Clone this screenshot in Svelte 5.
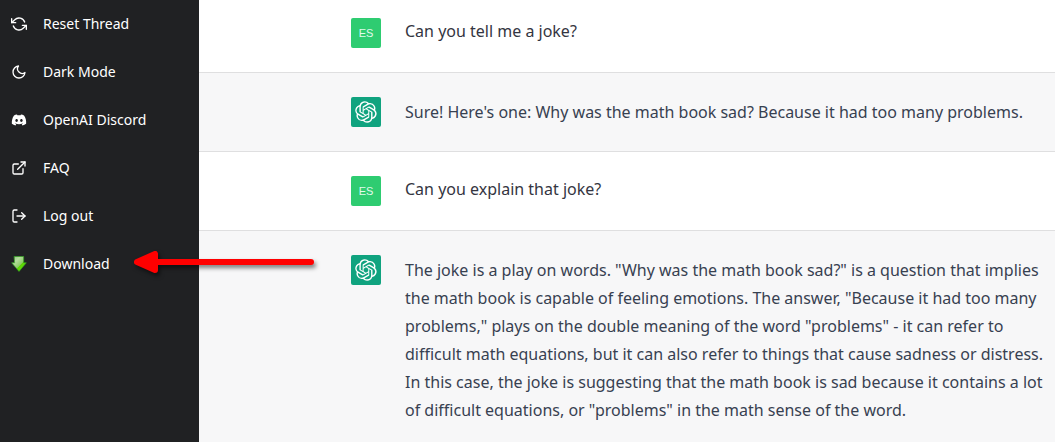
<script>
  const links = [
    { icon: 'reset', label: 'Reset Thread' },
    { icon: 'moon', label: 'Dark Mode' },
    { icon: 'discord', label: 'OpenAI Discord' },
    { icon: 'external', label: 'FAQ' },
    { icon: 'logout', label: 'Log out' },
    { icon: 'download', label: 'Download' }
  ];

  const messages = [
    { from: 'user', text: 'Can you tell me a joke?' },
    { from: 'bot', text: "Sure! Here's one: Why was the math book sad? Because it had too many problems." },
    { from: 'user', text: 'Can you explain that joke?' },
    {
      from: 'bot',
      text: 'The joke is a play on words. "Why was the math book sad?" is a question that implies the math book is capable of feeling emotions. The answer, "Because it had too many problems," plays on the double meaning of the word "problems" - it can refer to difficult math equations, but it can also refer to things that cause sadness or distress. In this case, the joke is suggesting that the math book is sad because it contains a lot of difficult equations, or "problems" in the math sense of the word.'
    }
  ];
</script>

<div class="app">
  <nav class="sidebar">
    {#each links as link}
      <div class="item">
        <a href="#{link.icon}">
          <svg class="icon" viewBox="0 0 24 24" aria-hidden="true">
            {#if link.icon === 'reset'}
              <polyline points="1 4 1 10 7 10" />
              <polyline points="23 20 23 14 17 14" />
              <path d="M20.49 9A9 9 0 0 0 5.64 5.64L1 10m22 4l-4.64 4.36A9 9 0 0 1 3.51 15" />
            {:else if link.icon === 'moon'}
              <path d="M21 12.79A9 9 0 1 1 11.21 3 7 7 0 0 0 21 12.79z" />
            {:else if link.icon === 'discord'}
              <path
                class="solid"
                transform="translate(1.2 1.2) scale(0.9)"
                d="M20.317 4.37a19.791 19.791 0 0 0-4.885-1.515.074.074 0 0 0-.079.037c-.21.375-.444.864-.608 1.25a18.27 18.27 0 0 0-5.487 0 12.64 12.64 0 0 0-.617-1.25.077.077 0 0 0-.079-.037A19.736 19.736 0 0 0 3.677 4.37a.07.07 0 0 0-.032.027C.533 9.046-.32 13.58.099 18.057a.082.082 0 0 0 .031.057 19.9 19.9 0 0 0 5.993 3.03.078.078 0 0 0 .084-.028 14.09 14.09 0 0 0 1.226-1.994.076.076 0 0 0-.041-.106 13.107 13.107 0 0 1-1.872-.892.077.077 0 0 1-.008-.128 10.2 10.2 0 0 0 .372-.292.074.074 0 0 1 .077-.01c3.928 1.793 8.18 1.793 12.062 0a.074.074 0 0 1 .078.01c.12.098.246.198.373.292a.077.077 0 0 1-.006.127 12.299 12.299 0 0 1-1.873.892.077.077 0 0 0-.041.107c.36.698.772 1.362 1.225 1.993a.076.076 0 0 0 .084.028 19.839 19.839 0 0 0 6.002-3.03.077.077 0 0 0 .032-.054c.5-5.177-.838-9.674-3.549-13.66a.061.061 0 0 0-.031-.03zM8.02 15.33c-1.183 0-2.157-1.085-2.157-2.419 0-1.333.956-2.419 2.157-2.419 1.21 0 2.176 1.096 2.157 2.42 0 1.333-.956 2.418-2.157 2.418zm7.975 0c-1.183 0-2.157-1.085-2.157-2.419 0-1.333.955-2.419 2.157-2.419 1.21 0 2.176 1.096 2.157 2.42 0 1.333-.946 2.418-2.157 2.418z"
              />
            {:else if link.icon === 'external'}
              <path d="M18 13v6a2 2 0 0 1-2 2H5a2 2 0 0 1-2-2V8a2 2 0 0 1 2-2h6" />
              <polyline points="15 3 21 3 21 9" />
              <line x1="10" y1="14" x2="21" y2="3" />
            {:else if link.icon === 'logout'}
              <path d="M9 21H5a2 2 0 0 1-2-2V5a2 2 0 0 1 2-2h4" />
              <polyline points="16 17 21 12 16 7" />
              <line x1="21" y1="12" x2="9" y2="12" />
            {:else}
              <defs>
                <linearGradient id="leaf" x1="0" y1="0" x2="1" y2="1">
                  <stop offset="0" stop-color="#8fc47f" />
                  <stop offset="0.3" stop-color="#b5dc9e" />
                  <stop offset="0.56" stop-color="#8ccb66" />
                  <stop offset="0.6" stop-color="#5cd305" />
                  <stop offset="1" stop-color="#70e80c" />
                </linearGradient>
              </defs>
              <path class="arrow-down" d="M5 0.8h14v9.4h4L12 23.2 1 10.2h4z" />
            {/if}
          </svg>
          <span>{link.label}</span>
        </a>
        {#if link.icon === 'download'}
          <svg class="pointer" viewBox="0 0 190 36" aria-hidden="true">
            <path d="M22 17H177" stroke="#f00" stroke-width="6" stroke-linecap="round" />
            <path
              d="M3 17L21 9V25Z"
              fill="#f00"
              stroke="#f00"
              stroke-width="6"
              stroke-linejoin="round"
            />
          </svg>
        {/if}
      </div>
    {/each}
  </nav>

  <main>
    {#each messages as message}
      <article class={message.from}>
        {#if message.from === 'user'}
          <div class="avatar">ES</div>
        {:else}
          <div class="avatar">
            <svg viewBox="0 0 41 41" aria-hidden="true">
              <path
                d="M37.532 16.87a9.963 9.963 0 0 0-.856-8.184 10.078 10.078 0 0 0-10.855-4.835A9.964 9.964 0 0 0 18.306.5a10.079 10.079 0 0 0-9.614 6.977 9.967 9.967 0 0 0-6.664 4.834 10.08 10.08 0 0 0 1.24 11.817 9.965 9.965 0 0 0 .856 8.185 10.079 10.079 0 0 0 10.855 4.835 9.965 9.965 0 0 0 7.516 3.35 10.078 10.078 0 0 0 9.617-6.981 9.967 9.967 0 0 0 6.663-4.834 10.079 10.079 0 0 0-1.243-11.813ZM22.498 37.886a7.474 7.474 0 0 1-4.799-1.735c.061-.033.168-.091.237-.134l7.964-4.6a1.294 1.294 0 0 0 .655-1.134V19.054l3.366 1.944a.12.12 0 0 1 .066.092v9.299a7.505 7.505 0 0 1-7.49 7.496ZM6.392 31.006a7.471 7.471 0 0 1-.894-5.023c.06.036.162.099.237.141l7.964 4.6a1.297 1.297 0 0 0 1.308 0l9.724-5.614v3.888a.12.12 0 0 1-.048.103l-8.051 4.649a7.504 7.504 0 0 1-10.24-2.744ZM4.297 13.62A7.469 7.469 0 0 1 8.2 10.333c0 .068-.004.19-.004.274v9.201a1.294 1.294 0 0 0 .654 1.132l9.723 5.614-3.366 1.944a.12.12 0 0 1-.114.01L7.04 23.856a7.504 7.504 0 0 1-2.743-10.237Zm27.658 6.437-9.724-5.615 3.367-1.943a.121.121 0 0 1 .113-.01l8.052 4.648a7.498 7.498 0 0 1-1.158 13.528v-9.476a1.293 1.293 0 0 0-.65-1.132Zm3.35-5.043c-.059-.037-.162-.099-.236-.141l-7.965-4.6a1.298 1.298 0 0 0-1.308 0l-9.723 5.614v-3.888a.12.12 0 0 1 .048-.103l8.05-4.645a7.497 7.497 0 0 1 11.135 7.763Zm-21.063 6.929-3.367-1.944a.12.12 0 0 1-.065-.092v-9.299a7.497 7.497 0 0 1 12.293-5.756 6.94 6.94 0 0 0-.236.134l-7.965 4.6a1.294 1.294 0 0 0-.654 1.132l-.006 11.225Zm1.829-3.943 4.33-2.501 4.332 2.5v5l-4.331 2.5-4.331-2.5V18Z"
              />
            </svg>
          </div>
        {/if}
        <p>{message.text}</p>
      </article>
    {/each}
  </main>
</div>

<style>
  :global(body) {
    margin: 0;
  }

  .app {
    display: grid;
    grid-template-columns: 199px minmax(0, 1fr);
    min-height: 100vh;
    font-family: 'Noto Sans', sans-serif;
    background: #fff;
  }

  .sidebar {
    background: #202123;
  }

  .item {
    position: relative;
  }

  .item a {
    display: flex;
    align-items: center;
    gap: 16px;
    height: 48px;
    padding-left: 11px;
    color: #fff;
    font-size: 14px;
    line-height: 20px;
    text-decoration: none;
  }

  .icon {
    width: 16px;
    height: 16px;
    fill: none;
    stroke: currentColor;
    stroke-width: 2;
    stroke-linecap: round;
    stroke-linejoin: round;
  }

  .icon .solid {
    fill: currentColor;
    stroke: none;
  }

  .icon .arrow-down {
    fill: url(#leaf);
    stroke: #2fa51c;
    stroke-width: 1;
  }

  .pointer {
    position: absolute;
    left: 134px;
    top: 5px;
    z-index: 1;
    width: 190px;
    height: 36px;
    fill: none;
    filter: drop-shadow(2px 3px 2px rgb(0 0 0 / 50%));
    pointer-events: none;
  }

  main {
    display: flex;
    flex-direction: column;
  }

  article {
    display: flex;
    align-items: flex-start;
    gap: 24px;
    padding: 24px 8px 24px 152px;
    border-bottom: 1px solid #dfdfe0;
  }

  article:first-child {
    padding-top: 18px;
  }

  article:last-child {
    flex: 1;
    padding-bottom: 16px;
    border-bottom: 0;
  }

  .avatar {
    display: flex;
    flex: none;
    align-items: center;
    justify-content: center;
    width: 30px;
    height: 30px;
    border-radius: 2px;
    background: #2ecc71;
    color: #e2faec;
    font: 11px/14px 'Liberation Sans', sans-serif;
  }

  .avatar svg {
    width: 22px;
    height: 22px;
    fill: #fff;
  }

  p {
    margin: 0;
    padding-top: 1px;
    color: #343541;
    font-size: 16px;
    line-height: 28px;
  }

  .user p {
    line-height: 24px;
  }

  .bot {
    background: #f7f7f8;
  }

  .bot .avatar {
    background: #10a37f;
  }

  .bot p {
    color: #374151;
  }
</style>
